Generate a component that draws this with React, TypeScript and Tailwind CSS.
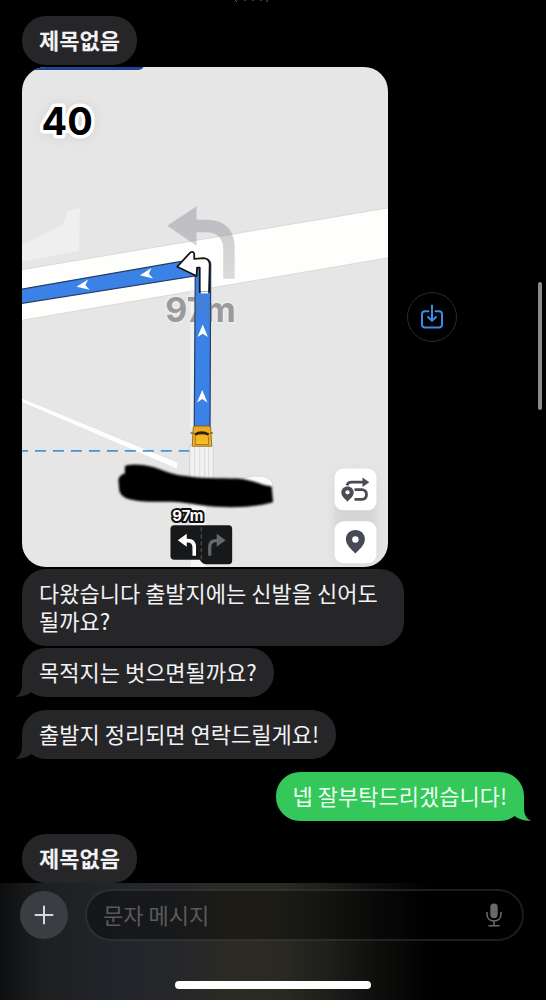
import type { ReactNode } from 'react';
import clsx from 'clsx';

type BubbleProps = {
  children: ReactNode;
  sent?: boolean;
  tail?: boolean;
  bold?: boolean;
};

const Bubble = ({ children, sent, tail, bold }: BubbleProps) => (
  <div
    className={clsx(
      'relative w-fit max-w-[76%] rounded-[24px] px-[17px] pt-[9px] pb-3 text-[22px] leading-[28px] break-keep',
      sent ? 'self-end bg-[#34c759] text-[#effff2]' : 'self-start bg-[#262628] text-[#f2f2f4]',
      bold && 'font-bold',
    )}
  >
    {tail && (
      <svg
        viewBox="0 0 24 25"
        className={clsx(
          'absolute bottom-0 h-[25px] w-6',
          sent ? '-right-[7px] -scale-x-100 text-[#34c759]' : '-left-[7px] text-[#262628]',
        )}
        fill="currentColor"
        aria-hidden="true"
      >
        <path d="M7 0V12C7 18 5 22.500 0 24.700C6.500 25 12 23.500 17 19.800L20 6Z" />
      </svg>
    )}
    <span className="relative">{children}</span>
  </div>
);

const Chevron = ({ x, y, angle = 0 }: { x: number; y: number; angle?: number }) => (
  <path d="M0 -6.5L5.2 6L0 2.6L-5.2 6Z" fill="#fff" transform={`translate(${x} ${y}) rotate(${angle})`} />
);

const MapPhoto = () => (
  <svg
    viewBox="22 67 367 501"
    className="block w-[73%] rounded-[24px] bg-[#e6e6e6] font-['Inter',sans-serif] font-bold"
    role="img"
    aria-label="지도"
  >
    <defs>
      <filter id="soft" x="-30%" y="-30%" width="160%" height="160%">
        <feGaussianBlur stdDeviation="4" />
      </filter>
      <filter id="smear" x="-5%" y="-10%" width="110%" height="120%">
        <feGaussianBlur stdDeviation="0.8" />
      </filter>
      <linearGradient id="fade" x1="0" y1="0" x2="0" y2="1">
        <stop offset="0" stopColor="#747884" stopOpacity="0.36" />
        <stop offset="0.4" stopColor="#747884" stopOpacity="0.34" />
        <stop offset="1" stopColor="#747884" stopOpacity="0.26" />
      </linearGradient>
      <linearGradient id="taxi" x1="0" y1="0" x2="0" y2="1">
        <stop offset="0" stopColor="#eaa51c" />
        <stop offset="1" stopColor="#fbbf2b" />
      </linearGradient>
    </defs>

    {/* top strip */}
    <path d="M22 66H144C143 69 141 70 138 70H22Z" fill="#1f4394" />

    {/* roads and blocks */}
    <path d="M22 245L63 225L68 211L80 208L79 251L22 262Z" fill="#efefef" />
    <path d="M20 270.300L391 207.700V257.700L20 321Z" fill="#fefefc" stroke="#d4d4cf" strokeWidth="0.8" />
    <path d="M22 398.500V403L178 470V463Z" fill="#fdfdfd" stroke="#d8d8d8" strokeWidth="0.5" />
    <path d="M190.500 290H196V430H190Z" fill="#f1f0ec" />
    <path d="M22 451.500H190" stroke="#4c93d0" strokeWidth="1.800" strokeDasharray="11 7" strokeDashoffset="5" />
    <path d="M190 446H213.500V480H190Z" fill="#f2f2f2" stroke="#c9c9c9" strokeWidth="0.8" />
    <path d="M195 447V479M200 447V479M205 447V479M209 447V479" stroke="#d9d9d9" strokeWidth="1" />
    <path d="M191 500H206V568H191Z" fill="#f6f6f6" />

    {/* ghost turn hint */}
    <path d="M167.500 226L196.800 206.500V220H206C225 220 235 230 235 248V279H223.500V249C223.500 238 217 232.500 206 232.500H196.800V246Z" fill="url(#fade)" />
    <text x="165.500" y="322" fontSize="34" fill="#a2a2a4" stroke="#ececec" strokeWidth="3" paintOrder="stroke">97m</text>

    {/* route */}
    <path d="M20 289.800L180 262L206 259Q211 260 211 265L210.300 428H194.500L195.500 276.300L20 304Z" fill="#3b82e6" stroke="#233c68" strokeWidth="1.200" />
    <text x="165.500" y="322" fontSize="34" fill="#777" opacity="0.18">97m</text>
    <Chevron x={83} y={286} angle={-99} />
    <Chevron x={146.500} y={274.500} angle={-99} />
    <Chevron x={203} y={331.500} />
    <Chevron x={202.500} y={397} />
    <path
      d="M177.500 267L190.500 252.800Q194.500 251 194.500 255V259.200L204 258.400Q210 259 210 265L209.300 292.500H200V268H197.300L196.800 276.300Z"
      fill="#fff"
      stroke="#161616"
      strokeWidth="1.800"
      strokeLinejoin="round"
    />
    <path d="M201 292.800H208.500" stroke="#fff" strokeWidth="2" />

    {/* car */}
    <path d="M193.500 428Q194 426.500 196 426.500H208Q210.500 426.500 211 428L212 446.800H192.500Z" fill="url(#taxi)" stroke="#7d5711" strokeWidth="0.8" />
    <path d="M190.800 433.500H194M210 433.500H213.200" stroke="#8d6515" strokeWidth="1.600" />
    <path d="M194.500 434Q202 429.500 209.500 434L208.500 436.200Q202 433.500 195.500 436.200Z" fill="#2c2413" />
    <path d="M195.500 437V445M209 437V445M195 445.200H209.500" stroke="#a06e12" strokeWidth="1" fill="none" />

    {/* marker scribble */}
    <path d="M236 481Q256 474 267 478Q275 482 273 490L240 488Z" fill="#fcfcfc" stroke="#d3d3d3" strokeWidth="0.8" />
    <path
      d="M125 467Q127 464.500 143 465.500C160 467.500 168 475 186 476.500C206 480 228 478 243 479.500C256 481.500 263 486 272 487L273.500 503C262 506 250 508 232 508C210 508 196 505 180 503C165 501.500 150 503.500 137 501.500Q122 500 119.500 492L118.500 480Q120 475 125 474Z"
      fill="#000"
      filter="url(#smear)"
    />

    {/* lane guide */}
    <text x="172.500" y="521.500" fontSize="15" fill="#fff" stroke="#111" strokeWidth="4" strokeLinejoin="round" paintOrder="stroke">97m</text>
    <path d="M174.500 526H229Q232.500 526 232.500 530V561Q232.500 565 229 565H206Q203 565 201.500 562.500L200 560.500H174.500Q170.700 560.500 170.700 557V530Q170.700 526 174.500 526Z" fill="#17181a" />
    <path d="M201.500 528V563" stroke="#5c5c5f" strokeWidth="1" strokeDasharray="4 3" />
    <path d="M178 541L187 534.500V547.500Z" fill="#fff" />
    <path d="M186 541.300H188Q194.500 541.300 194.500 548V556.500" fill="none" stroke="#fff" strokeWidth="3.600" />
    <path d="M226 541L217 534.500V547.500Z" fill="#66676a" />
    <path d="M218 541.300H216.500Q210 541.300 210 548V556.500" fill="none" stroke="#66676a" strokeWidth="3.200" />

    {/* speed limit */}
    <text x="41.500" y="135" fontSize="38" fill="#c9c9c9" stroke="#c9c9c9" strokeWidth="8" opacity="0.6" filter="url(#soft)">40</text>
    <text x="41.500" y="135" fontSize="38" fill="#000" stroke="#fff" strokeWidth="7" strokeLinejoin="round" paintOrder="stroke">40</text>

    {/* map buttons */}
    <rect x="335" y="471" width="42" height="94" rx="12" fill="#c4c4c7" opacity="0.5" filter="url(#soft)" />
    <rect x="335" y="469" width="42" height="42" rx="9" fill="#fff" />
    <rect x="335" y="522" width="42" height="42" rx="9" fill="#fff" />
    <g fill="none" stroke="#4a4c52" strokeWidth="2.800">
      <path d="M347.500 486Q348.500 482.800 352 482.800H364" />
      <path d="M355 490.300H362.500Q367 490.800 367 495.200T362.500 500.100H355" />
    </g>
    <path d="M363 478L369.800 482.800L363 487.600Z" fill="#4a4c52" />
    <path d="M348 487.200C351.700 487.200 354.200 489.900 354.200 493.200C354.200 497 350.500 499.500 348 502.300C345.500 499.500 341.800 497 341.800 493.200C341.800 489.900 344.300 487.200 348 487.200Z" fill="#4a4c56" />
    <circle cx="348" cy="493" r="2.100" fill="#fff" />
    <path d="M355.900 530.800C361.300 530.800 365.400 534.700 365.400 540C365.400 546 359.500 550.300 355.900 554.300C352.300 550.300 346.400 546 346.400 540C346.400 534.700 350.500 530.800 355.900 530.800Z" fill="#464956" />
    <circle cx="355.900" cy="540.200" r="3.200" fill="#fff" />
  </svg>
);

const SaveButton = () => (
  <button
    type="button"
    aria-label="저장"
    className="flex size-[50px] shrink-0 items-center justify-center rounded-full border border-[#2c2c2e]"
  >
    <svg viewBox="0 0 24 26" className="h-[26px] w-6" fill="none" stroke="#3a8bea" strokeWidth="2" strokeLinecap="round" strokeLinejoin="round">
      <path d="M8.500 7.200H5Q2 7.200 2 10.200V20.500Q2 23.500 5 23.500H19Q22 23.500 22 20.500V10.200Q22 7.200 19 7.200H15.500" />
      <path d="M12 1.500V16.500M8 13L12 16.800L16 13" />
    </svg>
  </button>
);

const Composer = () => (
  <footer className="bg-[linear-gradient(to_right,#0d0e0f_0%,#1d1f21_8%,#22252a_22%,#26272a_33%,#2b2a23_42%,#2b2a22_51%,#1e1e1b_60%,#0e0e0d_69%,#000_79%)] pb-[11px]">
    <form className="flex items-center gap-[17px] pt-[6px] pr-[22px] pl-5">
      <button
        type="button"
        aria-label="추가"
        className="flex size-12 shrink-0 items-center justify-center rounded-full bg-[#3a3d41]"
      >
        <svg viewBox="0 0 20 20" className="size-5" stroke="#d6d8da" strokeWidth="2" strokeLinecap="round">
          <path d="M10 1.500V18.500M1.500 10H18.500" />
        </svg>
      </button>
      <div className="flex h-[52px] min-w-0 flex-1 items-center rounded-full border-2 border-[#8c8c8c]/20 bg-black/35 pr-5 pl-4">
        <input
          type="text"
          aria-label="문자 메시지"
          placeholder="문자 메시지"
          className="min-w-0 flex-1 bg-transparent pb-[2px] text-[22px] leading-[28px] text-white outline-none placeholder:text-[#5a5a5a]"
        />
        <button type="button" aria-label="음성 입력">
          <svg viewBox="0 0 16 24" className="h-6 w-4" fill="none" stroke="#6a6a6b" strokeWidth="1.600" strokeLinecap="round">
            <rect x="4.300" y="0.500" width="7.400" height="14.800" rx="3.700" fill="#6a6a6b" stroke="none" />
            <path d="M1 9.500V11.500C1 15.500 4 18 8 18S15 15.500 15 11.500V9.500M8 18V22.500M3 22.700H13" />
          </svg>
        </button>
      </div>
    </form>
    <div className="mx-auto mt-10 h-2 w-[36%] rounded-full bg-white" />
  </footer>
);

export default function App() {
  return (
    <div className="relative flex min-h-screen flex-col overflow-hidden bg-black font-['Noto_Sans_CJK_KR',sans-serif]">
      {/* lower edge of the line scrolled off the top */}
      <svg viewBox="0 0 36 4" className="absolute top-0 left-[234px] h-1 w-9" fill="none" stroke="#77777b" aria-hidden="true">
        <path d="M1 -1Q1.500 1 3 2M34 -1Q33.500 1 32 2M10 0H12M18 0H20M26 0H28" />
      </svg>

      <main className="flex flex-1 flex-col px-[22px] pt-4">
        <section className="flex flex-col gap-[2px]">
          <Bubble bold>제목없음</Bubble>
          <div className="flex items-center gap-[19px]">
            <MapPhoto />
            <SaveButton />
          </div>
          <Bubble>다왔습니다 출발지에는 신발을 신어도 될까요?</Bubble>
          <Bubble tail>목적지는 벗으면될까요?</Bubble>
        </section>
        <section className="mt-[13px] flex flex-col gap-[13px]">
          <Bubble tail>출발지 정리되면 연락드릴게요!</Bubble>
          <Bubble sent tail>
            넵 잘부탁드리겠습니다!
          </Bubble>
          <Bubble bold>제목없음</Bubble>
        </section>
      </main>

      <Composer />

      {/* scroll indicator */}
      <div className="absolute top-[282px] right-1 h-[128px] w-1 rounded-full bg-[#8a8a8a]" />
    </div>
  );
}
